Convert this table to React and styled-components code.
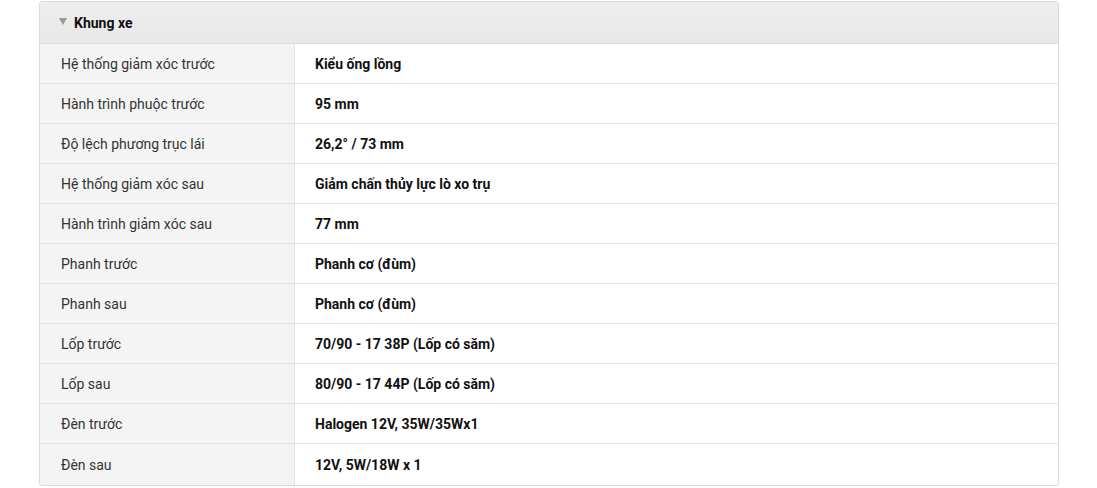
import React from "react";
import styled, { createGlobalStyle } from "styled-components";

const GlobalStyle = createGlobalStyle`
  * {
    box-sizing: border-box;
  }
  body {
    margin: 0;
    background: #fff;
    font-family: Roboto, "Liberation Sans", sans-serif;
  }
`;

const Page = styled.div`
  padding: 1px 38px 0 39px;
`;

const Panel = styled.div`
  border: 1px solid #dcdcdc;
  border-radius: 3px;
  overflow: hidden;
  box-shadow: 0 1px 1px rgba(0, 0, 0, 0.05);
`;

const Header = styled.div`
  display: flex;
  align-items: center;
  height: 42px;
  padding-left: 19px;
  background: linear-gradient(#eeeeee, #e8e8e8);
  border-bottom: 1px solid #dcdcdc;
  font-size: 14px;
  font-weight: 700;
  color: #111;
`;

const Caret = styled.span`
  width: 0;
  height: 0;
  border-left: 4.5px solid transparent;
  border-right: 4.5px solid transparent;
  border-top: 7px solid #999;
  margin-right: 7px;
  margin-top: -3px;
`;

const Row = styled.div`
  display: grid;
  grid-template-columns: 255px 1fr;
  height: ${(p) => (p.last ? "41px" : "40px")};
  border-bottom: ${(p) => (p.last ? "none" : "1px solid #e3e3e3")};
`;

const Label = styled.div`
  display: flex;
  align-items: center;
  padding-left: 21px;
  background: #f4f4f4;
  border-right: 1px solid #e3e3e3;
  font-size: 14px;
  color: #333;
`;

const Value = styled.div`
  display: flex;
  align-items: center;
  padding-left: 20px;
  background: #fff;
  font-size: 14px;
  font-weight: 700;
  color: #111;
`;

const specs = [
  ["Hệ thống giảm xóc trước", "Kiểu ống lồng"],
  ["Hành trình phuộc trước", "95 mm"],
  ["Độ lệch phương trục lái", "26,2° / 73 mm"],
  ["Hệ thống giảm xóc sau", "Giảm chấn thủy lực lò xo trụ"],
  ["Hành trình giảm xóc sau", "77 mm"],
  ["Phanh trước", "Phanh cơ (đùm)"],
  ["Phanh sau", "Phanh cơ (đùm)"],
  ["Lốp trước", "70/90 - 17 38P (Lốp có săm)"],
  ["Lốp sau", "80/90 - 17 44P (Lốp có săm)"],
  ["Đèn trước", "Halogen 12V, 35W/35Wx1"],
  ["Đèn sau", "12V, 5W/18W x 1"],
];

const App = () => (
  <>
    <GlobalStyle />
    <Page>
      <Panel>
        <Header>
          <Caret />
          Khung xe
        </Header>
        {specs.map(([k, v], i) => (
          <Row key={k} last={i === specs.length - 1}>
            <Label>{k}</Label>
            <Value>{v}</Value>
          </Row>
        ))}
      </Panel>
    </Page>
  </>
);

export default App;
